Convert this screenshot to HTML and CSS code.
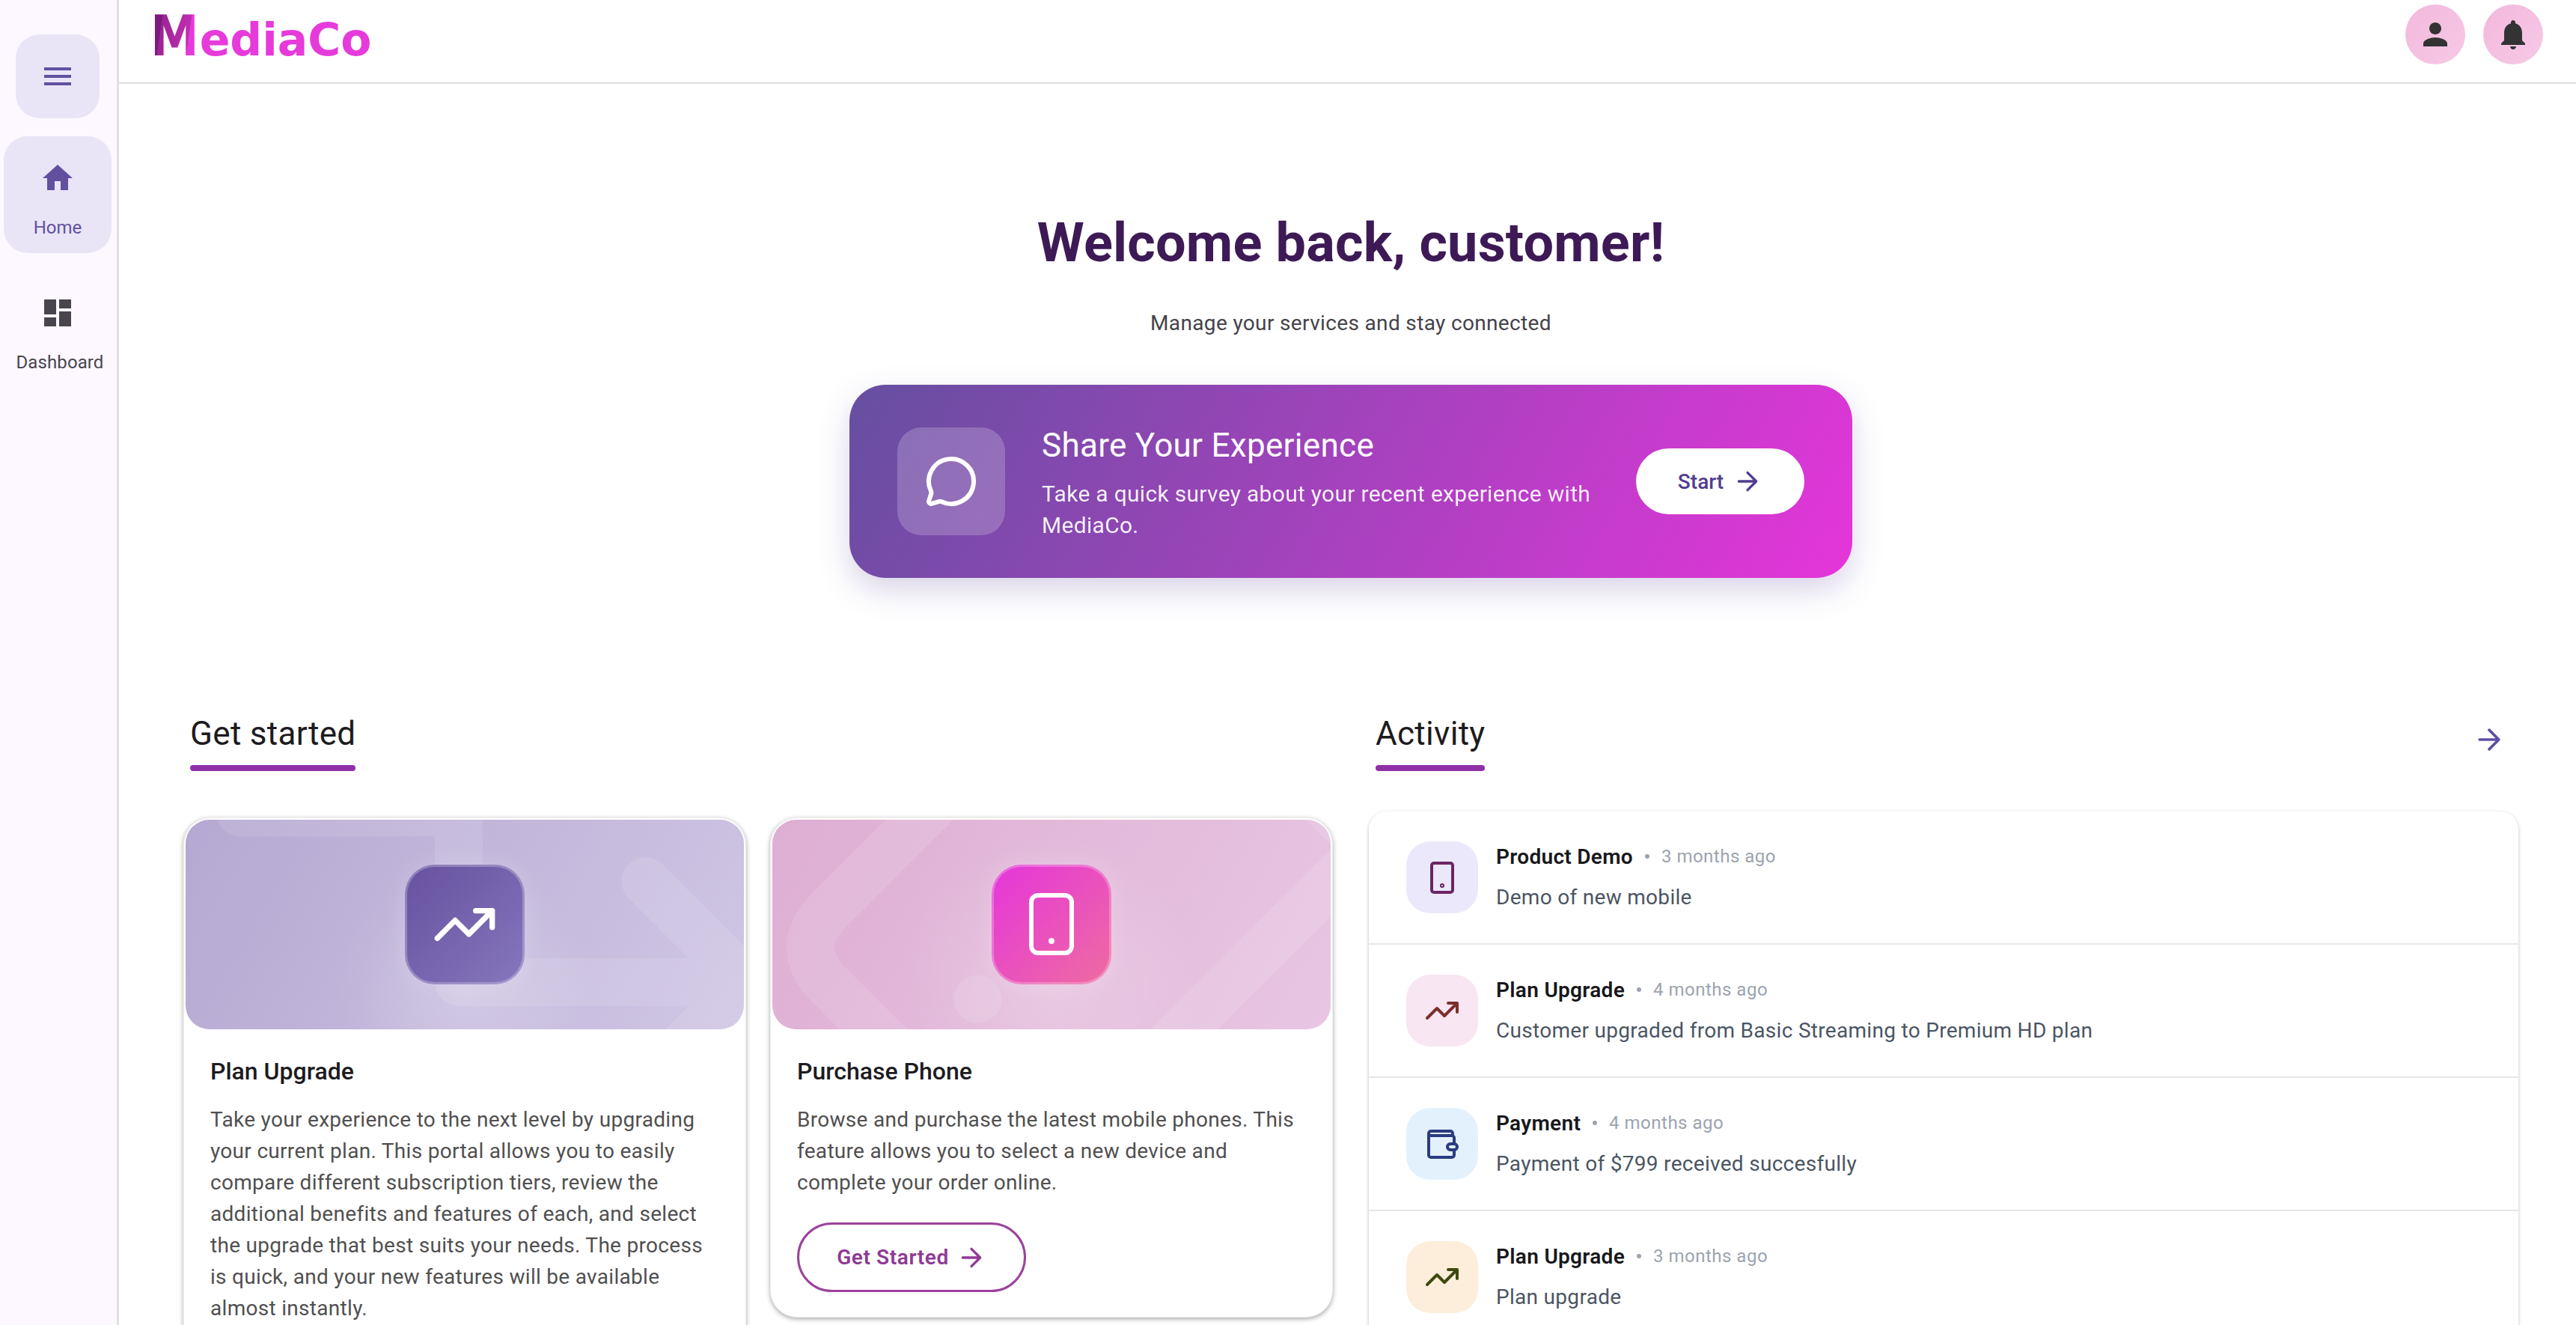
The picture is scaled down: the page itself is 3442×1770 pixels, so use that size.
FILE: index.html
```html
<!DOCTYPE html>
<html lang="en">
<head>
  <meta charset="UTF-8">
  <title>MediaCo</title>
  <link rel="stylesheet" href="styles.css">
</head>
<body>
  <!-- Navigation rail -->
  <aside class="rail">
    <button class="rail-menu">
      <svg class="icon-48" viewBox="0 0 24 24"><path d="M3 18h18v-2H3v2zm0-5h18v-2H3v2zm0-7v2h18V6H3z"/></svg>
    </button>
    <a href="#" class="rail-item rail-item--active">
      <svg class="icon-48" viewBox="0 0 24 24"><path d="M10 20v-6h4v6h5v-8h3L12 3 2 12h3v8z"/></svg>
      <span>Home</span>
    </a>
    <a href="#" class="rail-item">
      <svg class="icon-48" viewBox="0 0 24 24"><path d="M3 13h8V3H3v10zm0 8h8v-6H3v6zm10 0h8V11h-8v10zm0-18v6h8V3h-8z"/></svg>
      <span class="rail-label--wide">Dashboard</span>
    </a>
  </aside>

  <div class="page">
    <!-- Top bar -->
    <header class="topbar">
      <a href="#" class="logo"><span class="logo-m">M</span>ediaCo</a>
      <div class="topbar-actions">
        <button class="avatar">
          <svg class="icon-48" viewBox="0 0 24 24"><path d="M12 12c2.21 0 4-1.79 4-4s-1.79-4-4-4-4 1.79-4 4 1.79 4 4 4zm0 2c-2.67 0-8 1.34-8 4v2h16v-2c0-2.66-5.33-4-8-4z"/></svg>
        </button>
        <button class="avatar">
          <svg class="icon-48" viewBox="0 0 24 24"><path d="M12 22c1.1 0 2-.9 2-2h-4c0 1.1.89 2 2 2zm6-6v-5c0-3.07-1.64-5.64-4.5-6.32V4c0-.83-.67-1.5-1.5-1.5s-1.5.67-1.5 1.5v.68C7.63 5.36 6 7.92 6 11v5l-2 2v1h16v-1l-2-2z"/></svg>
        </button>
      </div>
    </header>

    <main class="content">
      <!-- Hero -->
      <section class="hero">
        <h1>Welcome back, customer!</h1>
        <p class="hero-sub">Manage your services and stay connected</p>
        <div class="banner">
          <div class="banner-icon">
            <svg class="stroke-icon" width="72" height="72" viewBox="0 0 24 24"><path d="M2.992 16.342a2 2 0 0 1 .094 1.167l-1.065 3.29a1 1 0 0 0 1.236 1.168l3.413-.998a2 2 0 0 1 1.099.092 10 10 0 1 0-4.777-4.719"/></svg>
          </div>
          <div class="banner-text">
            <h2>Share Your Experience</h2>
            <p>Take a quick survey about your recent experience with MediaCo.</p>
          </div>
          <a href="#" class="banner-btn">Start
            <svg class="stroke-icon" width="40" height="40" viewBox="0 0 24 24"><path d="M5 12h14M12 5l7 7-7 7"/></svg>
          </a>
        </div>
      </section>

      <div class="columns">
        <!-- Get started -->
        <section>
          <div class="section-head">
            <h2 class="section-title">Get started</h2>
          </div>
          <div class="cards">
            <article class="card">
              <div class="card-art card-art--purple">
                <svg class="card-shapes" viewBox="0 0 748 280">
                  <path d="M73 -50V-10H366V217H751M616 82L751 217L600 368"/>
                </svg>
                <div class="card-badge card-badge--purple">
                  <svg class="stroke-icon" width="88" height="88" viewBox="0 0 24 24"><path d="M22 7l-8.5 8.5-5-5L2 17M16 7h6v6"/></svg>
                </div>
              </div>
              <div class="card-body">
                <h3>Plan Upgrade</h3>
                <p>Take your experience to the next level by upgrading your current plan. This portal allows you to easily compare different subscription tiers, review the additional benefits and features of each, and select the upgrade that best suits your needs. The process is quick, and your new features will be available almost instantly.</p>
                <a href="#" class="outline-btn">Get Started
                  <svg class="stroke-icon" width="40" height="40" viewBox="0 0 24 24"><path d="M5 12h14M12 5l7 7-7 7"/></svg>
                </a>
              </div>
            </article>

            <article class="card">
              <div class="card-art card-art--pink">
                <svg class="card-shapes" viewBox="0 0 748 280">
                  <path d="M240 -43L76 121Q26 171 76 221L170 315"/>
                  <path d="M690 -70L770 10Q790 36 770 62L500 332"/>
                  <circle cx="275" cy="240" r="32"/>
                </svg>
                <div class="card-badge card-badge--pink">
                  <svg class="badge-phone" width="96" height="96" viewBox="0 0 96 96">
                    <rect x="21" y="9" width="54" height="77" rx="9"/>
                    <circle cx="48" cy="70" r="4"/>
                  </svg>
                </div>
              </div>
              <div class="card-body">
                <h3>Purchase Phone</h3>
                <p>Browse and purchase the latest mobile phones. This feature allows you to select a new device and complete your order online.</p>
                <a href="#" class="outline-btn">Get Started
                  <svg class="stroke-icon" width="40" height="40" viewBox="0 0 24 24"><path d="M5 12h14M12 5l7 7-7 7"/></svg>
                </a>
              </div>
            </article>
          </div>
        </section>

        <!-- Activity -->
        <section>
          <div class="section-head">
            <h2 class="section-title">Activity</h2>
            <svg class="stroke-icon section-arrow" width="44" height="44" viewBox="0 0 24 24"><path d="M5 12h14M12 5l7 7-7 7"/></svg>
          </div>
          <div class="activity">
            <div class="activity-row">
              <div class="activity-icon activity-icon--violet">
                <svg class="line-icon" width="48" height="48" viewBox="0 0 48 48">
                  <rect x="10" y="5" width="28" height="39" rx="3"/>
                  <circle class="dot" cx="24" cy="35" r="1"/>
                </svg>
              </div>
              <div>
                <div class="activity-head"><strong>Product Demo</strong><i></i><span>3 months ago</span></div>
                <p>Demo of new mobile</p>
              </div>
            </div>
            <div class="activity-row">
              <div class="activity-icon activity-icon--rose">
                <svg class="line-icon" width="48" height="48" viewBox="0 0 24 24"><path d="M22 7l-8.5 8.5-5-5L2 17M16 7h6v6"/></svg>
              </div>
              <div>
                <div class="activity-head"><strong>Plan Upgrade</strong><i></i><span>4 months ago</span></div>
                <p>Customer upgraded from Basic Streaming to Premium HD plan</p>
              </div>
            </div>
            <div class="activity-row">
              <div class="activity-icon activity-icon--blue">
                <svg class="line-icon" width="48" height="48" viewBox="0 0 48 48">
                  <path d="M6 12v27a3 3 0 0 0 3 3h28a3 3 0 0 0 3-3v-7"/>
                  <path d="M40 23v-7a3 3 0 0 0-3-3H9a3 3 0 0 1 0-6h26a3 3 0 0 1 3 3v3"/>
                  <rect x="31" y="24" width="13" height="8" rx="4"/>
                </svg>
              </div>
              <div>
                <div class="activity-head"><strong>Payment</strong><i></i><span>4 months ago</span></div>
                <p>Payment of $799 received succesfully</p>
              </div>
            </div>
            <div class="activity-row">
              <div class="activity-icon activity-icon--amber">
                <svg class="line-icon" width="48" height="48" viewBox="0 0 24 24"><path d="M22 7l-8.5 8.5-5-5L2 17M16 7h6v6"/></svg>
              </div>
              <div>
                <div class="activity-head"><strong>Plan Upgrade</strong><i></i><span>3 months ago</span></div>
                <p>Plan upgrade</p>
              </div>
            </div>
          </div>
        </section>
      </div>
    </main>
  </div>
</body>
</html>
```

FILE: styles.css
```css
*, *:before,
*:after {
  box-sizing: border-box;
}

html, body {
  height: 100%;
}

body {
  margin: 0;
  display: flex;
  overflow: hidden;
  background: #fff;
  color: #1d1b20;
  font: 400 28px Roboto, sans-serif;
}

h1, h2, h3, p {
  margin: 0;
}

a {
  text-decoration: none;
}

button {
  border: 0;
  padding: 0;
  cursor: pointer;
}

.icon-48 {
  display: block;
  width: 48px;
  height: 48px;
  fill: currentColor;
}

.stroke-icon {
  fill: none;
  stroke: currentColor;
  stroke-width: 2;
  stroke-linecap: round;
  stroke-linejoin: round;
}

/* Rail */
.rail {
  width: 159px;
  flex: none;
  display: flex;
  flex-direction: column;
  align-items: stretch;
  padding: 46px 8px 0 5px;
  background: #fdf8ff;
  border-right: 3px solid #e2dee6;
}

.rail-menu {
  width: 112px;
  height: 112px;
  margin-left: 16px;
  display: flex;
  justify-content: center;
  align-items: center;
  color: #62509f;
  background: #e9e5f7;
  border-radius: 32px;
}

.rail-item {
  display: flex;
  flex-direction: column;
  align-items: center;
  height: 156px;
  width: 144px;
  padding-top: 32px;
  color: #49454f;
  font-size: 24px;
  line-height: 32px;
  border-radius: 32px;
  white-space: nowrap;
}

.rail-item span {
  margin-top: 26px;
}

.rail-item .rail-label--wide {
  margin-left: 6px;
  letter-spacing: .1px;
}

.rail-item--active {
  margin-top: 24px;
  margin-bottom: 24px;
  color: #62509f;
  background: #e9e5f7;
}

/* Top bar */
.page {
  flex: 1;
  min-width: 0;
}

.topbar {
  height: 112px;
  display: flex;
  justify-content: space-between;
  align-items: flex-start;
  padding: 6px 44px 0 42px;
  border-bottom: 2px solid #e0e0e0;
}

.logo {
  display: flex;
  align-items: baseline;
  color: #e63adb;
  font: 700 60px/84px "DejaVu Sans", sans-serif;
}

.logo-m {
  display: inline-block;
  margin-right: -8px;
  color: transparent;
  font-size: 74px;
  background: linear-gradient(100deg, #7d1a80 0 24%, #9b2592 24%, #bf2eb2 74%, #e63adb 74%);
  -webkit-background-clip: text;
  background-clip: text;
  transform: scaleX(.88);
  transform-origin: left;
}

.topbar-actions {
  display: flex;
  gap: 24px;
}

.avatar {
  width: 80px;
  height: 80px;
  display: flex;
  justify-content: center;
  align-items: center;
  color: #333;
  background: linear-gradient(135deg, #f3b8dc, #f6c9e6);
  border-radius: 50%;
}

/* Content */
.content {
  padding: 171px 77px 0 86px;
}

.hero {
  display: flex;
  flex-direction: column;
  align-items: center;
}

.hero h1 {
  color: #3d1a56;
  font-size: 72px;
  font-weight: 700;
  line-height: 84px;
  letter-spacing: .2px;
}

.hero-sub {
  margin-top: 45px;
  color: #45434a;
  line-height: 40px;
  letter-spacing: .35px;
}

.banner {
  width: 1340px;
  height: 258px;
  margin-top: 62px;
  display: flex;
  align-items: center;
  padding: 0 64px;
  color: #fff;
  background: linear-gradient(120deg, #654fa0, #e535da);
  border-radius: 48px;
  box-shadow: 0 16px 40px rgba(103, 80, 164, .25);
}

.banner-icon {
  width: 144px;
  height: 144px;
  flex: none;
  display: flex;
  justify-content: center;
  align-items: center;
  background: rgba(255, 255, 255, .2);
  border-radius: 32px;
}

.banner-text {
  flex: 1;
  margin: 0 50px 0 49px;
  padding-top: 6px;
}

.banner-text h2 {
  font-size: 44px;
  font-weight: 400;
  line-height: 52px;
  letter-spacing: .3px;
}

.banner-text p {
  margin-top: 18px;
  font-size: 30px;
  line-height: 42px;
  letter-spacing: .3px;
  opacity: .92;
}

.banner-btn {
  width: 225px;
  height: 88px;
  flex: none;
  display: flex;
  justify-content: center;
  align-items: center;
  gap: 12px;
  color: #513d8f;
  font-weight: 500;
  background: #fff;
  border-radius: 44px;
}

/* Columns */
.columns {
  display: grid;
  grid-template-columns: 1fr 1fr;
  gap: 48px;
  margin-top: 180px;
}

.section-head {
  display: flex;
  justify-content: space-between;
  align-items: flex-start;
  padding-left: 9px;
}

.section-title {
  height: 78px;
  font-size: 44px;
  font-weight: 400;
  line-height: 56px;
  letter-spacing: .3px;
}

.section-title:after {
  content: "";
  display: block;
  height: 8px;
  margin-top: 14px;
  background: #9030a8;
  border-radius: 4px;
}

.section-arrow {
  margin: 14px 17px 0 0;
  color: #5f4ea3;
}

.cards {
  display: grid;
  grid-template-columns: 1fr 1fr;
  gap: 32px;
  align-items: start;
  margin-top: 62px;
}

.card {
  padding: 2px;
  background: #fff;
  border: 1px solid #eee;
  border-radius: 36px;
  box-shadow: 0 2px 6px rgba(0, 0, 0, .35);
}

.card-art {
  position: relative;
  height: 280px;
  display: flex;
  justify-content: center;
  align-items: center;
  overflow: hidden;
  border-radius: 32px;
}

.card-art--purple {
  background: radial-gradient(circle at 50% 82%, rgba(255, 255, 255, .22), transparent 170px),
    linear-gradient(120deg, #b5a8d2, #d0c6e4);
}

.card-art--pink {
  background: radial-gradient(circle at 50% 78%, rgba(255, 255, 255, .2), transparent 200px),
    linear-gradient(120deg, #deaed3, #e8c6e3);
}

.card-shapes {
  position: absolute;
  inset: 0;
  width: 100%;
  height: 100%;
  fill: none;
  stroke: rgba(255, 255, 255, .11);
  stroke-width: 64;
  stroke-linejoin: round;
  stroke-linecap: round;
}

.card-shapes circle {
  fill: rgba(255, 255, 255, .11);
  stroke: none;
}

.card-badge {
  position: relative;
  width: 160px;
  height: 160px;
  display: flex;
  justify-content: center;
  align-items: center;
  color: #fff;
  border: 3px solid rgba(255, 255, 255, .25);
  border-radius: 40px;
  box-shadow: 0 0 32px rgba(255, 255, 255, .2);
  background-origin: border-box;
}

.card-badge--purple {
  background-image: linear-gradient(135deg, #66519f, #8677bd);
}

.card-badge--pink {
  background-image: linear-gradient(135deg, #e535db, #ee6ca0);
}

.badge-phone {
  fill: none;
  stroke: #fff;
  stroke-width: 6;
}

.badge-phone circle {
  fill: #fff;
  stroke: none;
}

.card-body {
  padding: 36px 33px 31px;
}

.card-body h3 {
  font-size: 32px;
  font-weight: 500;
  line-height: 40px;
}

.card-body p {
  margin-top: 24px;
  color: #505050;
  line-height: 42px;
  letter-spacing: .3px;
}

.outline-btn {
  width: 306px;
  height: 93px;
  margin-top: 32px;
  display: flex;
  justify-content: center;
  align-items: center;
  gap: 10px;
  color: #8f3a93;
  font-weight: 600;
  letter-spacing: .6px;
  border: 3px solid #9c429e;
  border-radius: 47px;
}

/* Activity list */
.activity {
  margin-top: 54px;
  background: #fff;
  border-radius: 24px 24px 0 0;
  box-shadow: 0 2px 5px rgba(0, 0, 0, .25);
}

.activity-row {
  display: flex;
  gap: 24px;
  padding: 40px 50px;
  border-bottom: 2px solid #e5e7eb;
}

.activity-icon {
  width: 96px;
  height: 96px;
  flex: none;
  display: flex;
  justify-content: center;
  align-items: center;
  border-radius: 32px;
}

.line-icon {
  fill: none;
  stroke: currentColor;
  stroke-width: 4;
  stroke-linecap: round;
  stroke-linejoin: round;
}

.line-icon[viewBox="0 0 24 24"] {
  stroke-width: 2;
}

.activity-icon--violet { color: #6b2566; background: #ece8fb; }
.activity-icon--rose { color: #7b2f2a; background: #f8e6f2; }
.activity-icon--blue { color: #2a3c80; background: #e3f1fd; }
.activity-icon--amber { color: #3f4a0f; background: #fdeedb; }

.activity-head {
  display: flex;
  align-items: center;
  height: 40px;
}

.activity-head strong {
  color: #18181b;
  font-size: 28px;
  font-weight: 600;
  letter-spacing: .3px;
}

.activity-head i {
  width: 6px;
  height: 6px;
  margin: 0 16px;
  background: #9ca3af;
  border-radius: 50%;
}

.activity-head span {
  color: #9ca3af;
  font-size: 24px;
  letter-spacing: .5px;
}

.activity-row p {
  margin-top: 15px;
  margin-bottom: -1px;
  color: #4b5563;
  line-height: 40px;
  letter-spacing: .3px;
}
```
